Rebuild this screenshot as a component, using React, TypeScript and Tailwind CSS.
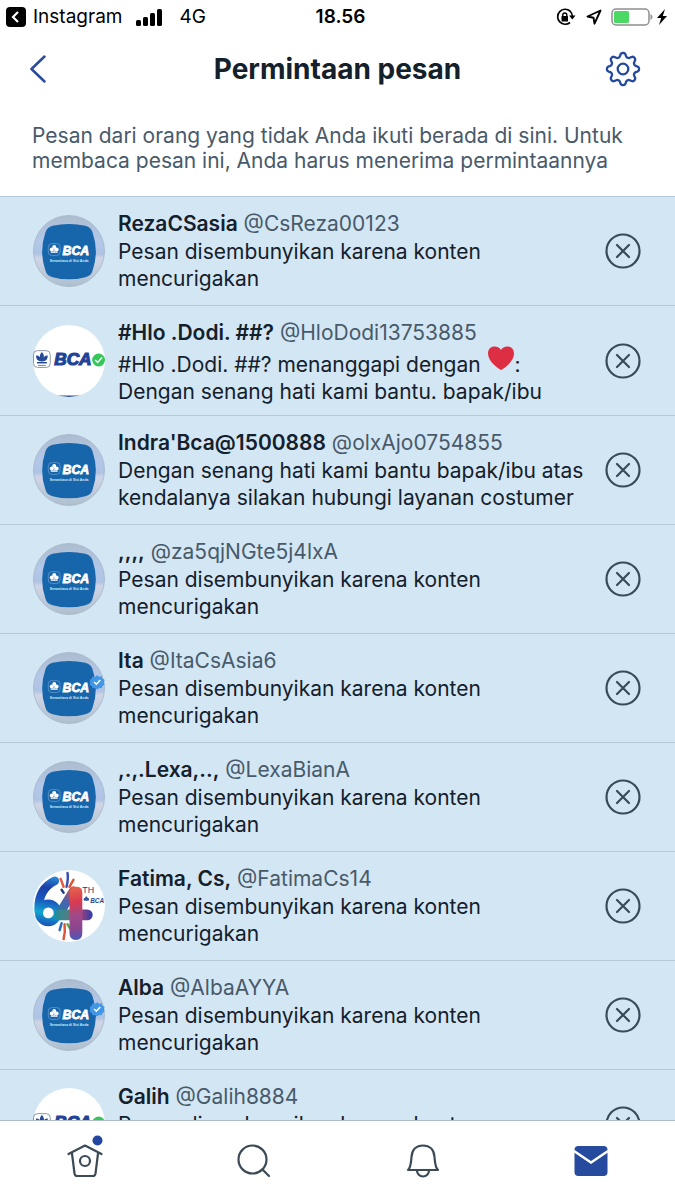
import React from "react";

type AvatarKind = "blue" | "blueVerified" | "white" | "anniversary";

interface MessageRequest {
  name: string;
  handle: string;
  avatar: AvatarKind;
  message: React.ReactNode;
}

const HIDDEN_MESSAGE = "Pesan disembunyikan karena konten mencurigakan";

const Heart = () => (
  <svg viewBox="0 0 28 26" className="-mt-2 inline-block h-[26px] w-7 align-[1px]" role="img" aria-label="hati">
    <path
      d="M14 25C12 24 1 17 1 8.500C1 4 4 1.500 7.500 1.500C10.500 1.500 13 3 14 5C15 3 17.500 1.500 20.500 1.500C24 1.500 27 4 27 8.500C27 17 16 24 14 25Z"
      fill="#dd2e44"
    />
  </svg>
);

const requests: MessageRequest[] = [
  { name: "RezaCSasia", handle: "@CsReza00123", avatar: "blue", message: HIDDEN_MESSAGE },
  {
    name: "#Hlo .Dodi. ##?",
    handle: "@HloDodi13753885",
    avatar: "white",
    message: (
      <>
        <span className="block pt-1">
          #Hlo .Dodi. ##? menanggapi dengan <Heart />:
        </span>
        <span className="block">Dengan senang hati kami bantu. bapak/ibu</span>
      </>
    ),
  },
  {
    name: "Indra'Bca@1500888",
    handle: "@olxAjo0754855",
    avatar: "blue",
    message: "Dengan senang hati kami bantu bapak/ibu atas kendalanya silakan hubungi layanan costumer",
  },
  { name: ",,,,", handle: "@za5qjNGte5j4lxA", avatar: "blue", message: HIDDEN_MESSAGE },
  { name: "Ita", handle: "@ItaCsAsia6", avatar: "blueVerified", message: HIDDEN_MESSAGE },
  { name: ",.,.Lexa,..,", handle: "@LexaBianA", avatar: "blue", message: HIDDEN_MESSAGE },
  { name: "Fatima, Cs,", handle: "@FatimaCs14", avatar: "anniversary", message: HIDDEN_MESSAGE },
  { name: "Alba", handle: "@AlbaAYYA", avatar: "blueVerified", message: HIDDEN_MESSAGE },
  { name: "Galih", handle: "@Galih8884", avatar: "white", message: HIDDEN_MESSAGE },
];

const Clover = ({ color }: { color: string }) => (
  <g fill={color}>
    <circle cx="6" cy="3.500" r="2" />
    <circle cx="3.500" cy="6" r="2" />
    <circle cx="8.500" cy="6" r="2" />
    <path d="M5.500 5h1v3h3v1.200h-7V8h3z" />
  </g>
);

const BlueAvatar = ({ id, verified }: { id: string; verified?: boolean }) => (
  <svg viewBox="0 0 73 73" className="size-[72px] shrink-0" role="img" aria-label="BCA">
    <defs>
      <linearGradient id={`${id}-ring`} x1="0" y1="0" x2="0" y2="1">
        <stop offset="0" stopColor="#adbdcf" />
        <stop offset="0.350" stopColor="#b3c7e8" />
        <stop offset="0.540" stopColor="#afc3e4" />
        <stop offset="0.600" stopColor="#d0d5e6" />
        <stop offset="1" stopColor="#adbfce" />
      </linearGradient>
    </defs>
    <circle cx="36.500" cy="36.500" r="36" fill={`url(#${id}-ring)`} stroke="#a5b5c6" strokeWidth="0.800" />
    <path
      d="M20 11Q36.500 7 53 11Q59 12.500 60.500 18Q67 37 60.500 56Q59 62 53 63Q36.500 67.500 20 63Q14 62 12.500 56Q6 37 12.500 18Q14 12.500 20 11Z"
      fill="#1765ab"
    />
    <rect x="15.500" y="29" width="12" height="12" rx="3.500" fill="none" stroke="#6fa0d0" strokeWidth="0.700" />
    <g transform="translate(15.500 29)">
      <Clover color="#fff" />
    </g>
    <text x="30" y="40.500" fontFamily="Liberation Sans, sans-serif" fontSize="12.500" fontWeight="700" fontStyle="italic" fill="#fff" stroke="#fff" strokeWidth="0.800">
      BCA
    </text>
    <text x="17" y="47.500" fontFamily="Liberation Sans, sans-serif" fontSize="3.500" fontWeight="700" fill="#d8e6f3">
      Senantiasa di Sisi Anda
    </text>
    {verified && (
      <g>
        <path
          d="M65 23.500l2 1.500 2.500-.3 1 2.300 2 1.200-.5 2.500.5 2.500-2 1.200-1 2.300-2.500-.3-2 1.500-2-1.500-2.500.3-1-2.300-2-1.200.5-2.500-.5-2.500 2-1.200 1-2.300 2.500.3z"
          fill="#4197e4"
        />
        <path d="M62 30.500l2.200 2.200 4-4.200" fill="none" stroke="#fff" strokeWidth="1.500" />
      </g>
    )}
  </svg>
);

const WhiteAvatar = ({ id }: { id: string }) => (
  <svg viewBox="0 0 73 73" className="size-[72px] shrink-0" role="img" aria-label="BCA">
    <clipPath id={`${id}-clip`}>
      <circle cx="36.500" cy="36.500" r="36.500" />
    </clipPath>
    <g clipPath={`url(#${id}-clip)`}>
      <rect width="73" height="73" fill="#fff" />
      <rect x="20" y="71.500" width="33" height="3" fill="#2a4b8c" />
    </g>
    <rect x="0.500" y="26" width="17" height="17" rx="4" fill="#fff" stroke="#8c94a5" strokeWidth="1" />
    <g fill="#254a98">
      <path d="M9 27.500Q13 31 9.500 37H8.500Q5 31 9 27.500Z" />
      <path d="M3 31Q8 31 8.700 37Q3 37 3 31Z" />
      <path d="M15 31Q10 31 9.300 37Q15 37 15 31Z" />
      <path d="M4 37.500h10v1.500H4z" />
    </g>
    <path d="M5 41h8" stroke="#7085b6" strokeWidth="1" />
    <text x="21.500" y="41" fontFamily="Liberation Sans, sans-serif" fontSize="17.500" fontWeight="700" fontStyle="italic" fill="#1f4398" stroke="#1f4398" strokeWidth="1.200">
      BCA
    </text>
    <circle cx="66.500" cy="35.500" r="6.500" fill="#35c75a" />
    <path d="M63 35.500l2.500 2.500 4.500-5" fill="none" stroke="#fff" strokeWidth="1.500" />
  </svg>
);

const AnniversaryAvatar = () => (
  <svg viewBox="0 0 73 73" className="size-[72px] shrink-0" role="img" aria-label="64th BCA">
    <defs>
      <linearGradient id="six" gradientUnits="userSpaceOnUse" x1="20" y1="6" x2="10" y2="56">
        <stop offset="0" stopColor="#2a8fd8" />
        <stop offset="0.250" stopColor="#1b3fa8" />
        <stop offset="0.500" stopColor="#1a58c0" />
        <stop offset="0.750" stopColor="#12a5cf" />
        <stop offset="1" stopColor="#1a50b8" />
      </linearGradient>
      <linearGradient id="four" gradientUnits="userSpaceOnUse" x1="38" y1="17" x2="48" y2="70">
        <stop offset="0" stopColor="#e8664c" />
        <stop offset="0.300" stopColor="#d83a50" />
        <stop offset="0.550" stopColor="#a04a8a" />
        <stop offset="0.800" stopColor="#8a4590" />
        <stop offset="1" stopColor="#4a58b8" />
      </linearGradient>
      <linearGradient id="diagonal" gradientUnits="userSpaceOnUse" x1="42" y1="18" x2="24" y2="46">
        <stop offset="0" stopColor="#d8504a" />
        <stop offset="0.500" stopColor="#4a62b0" />
        <stop offset="1" stopColor="#1d7d98" />
      </linearGradient>
      <linearGradient id="bar" gradientUnits="userSpaceOnUse" x1="22" y1="45" x2="60" y2="45">
        <stop offset="0" stopColor="#1f8f9c" />
        <stop offset="0.400" stopColor="#5a7a80" />
        <stop offset="0.650" stopColor="#b04070" />
        <stop offset="1" stopColor="#2e3fae" />
      </linearGradient>
    </defs>
    <circle cx="36.500" cy="36.500" r="36.500" fill="#fff" />
    <g fill="none" strokeLinecap="round" strokeWidth="2.500">
      <path d="M31 17L28 9" stroke="#e65a43" />
      <path d="M34 17Q36 9 35 3" stroke="#3a50b0" />
      <path d="M37 17L41 10" stroke="#e15436" />
      <path d="M31 23L29 20" stroke="#1d3a83" />
      <path d="M32 55Q33 63 31 70" stroke="#df563f" />
      <path d="M35 55L38 60" stroke="#5ba651" />
      <path d="M29 54L27 61" stroke="#3168bb" />
    </g>
    <path d="M22 11C10 17 5 28 6 42" fill="none" stroke="url(#six)" strokeWidth="9" strokeLinecap="round" />
    <circle cx="15.500" cy="43.500" r="9.500" fill="none" stroke="url(#six)" strokeWidth="8" />
    <path d="M41 21L27 44" stroke="url(#diagonal)" strokeWidth="9" strokeLinecap="round" />
    <path d="M27 45.500H55" stroke="url(#bar)" strokeWidth="11" strokeLinecap="round" />
    <path d="M37 24Q37 17 44 17Q50 17 50 23V64Q50 71 43.500 71Q37 71 37 64Z" fill="url(#four)" />
    <text x="50" y="23.500" fontFamily="Liberation Sans, sans-serif" fontSize="9" fill="#283b73">
      TH
    </text>
    <g transform="translate(50.500 26) scale(0.600)">
      <Clover color="#254a98" />
    </g>
    <text x="58" y="33" fontFamily="Liberation Sans, sans-serif" fontSize="6.500" fontWeight="700" fontStyle="italic" fill="#254a98">
      BCA
    </text>
  </svg>
);

const Avatar = ({ kind, id }: { kind: AvatarKind; id: string }) => {
  if (kind === "white") return <WhiteAvatar id={id} />;
  if (kind === "anniversary") return <AnniversaryAvatar />;
  return <BlueAvatar id={id} verified={kind === "blueVerified"} />;
};

const StatusBar = () => (
  <div className="grid h-[34px] grid-cols-[1fr_auto_1fr] items-center pr-1 pl-[6px] text-[19px] text-black">
    <div className="flex items-center">
      <svg viewBox="0 0 20 20" className="size-5">
        <rect width="20" height="20" rx="4" fill="#000" />
        <path d="M12 5L7 10l5 5" fill="none" stroke="#fff" strokeWidth="2.200" />
      </svg>
      <span className="ml-[7px]">Instagram</span>
      <svg viewBox="0 0 27 17" className="ml-[14px] h-[17px] w-[27px]">
        <rect x="0" y="11" width="5" height="6" rx="1.500" />
        <rect x="7" y="8" width="5" height="9" rx="1.500" />
        <rect x="14" y="4" width="5" height="13" rx="1.500" />
        <rect x="21" y="0" width="5" height="17" rx="1.500" />
      </svg>
      <span className="ml-4">4G</span>
    </div>
    <span className="pl-1 font-semibold">18.56</span>
    <div className="mr-1 flex items-center justify-end">
      <svg viewBox="0 0 20 18" className="h-[18px] w-5" fill="none" stroke="#000" strokeWidth="1.700">
        <path d="M14 3A7.500 7.500 0 1 0 14 14.500M14 3Q16 5 16.300 8" />
        <path d="M13 7.500h6.500l-3.200 4z" fill="#000" stroke="none" />
        <rect x="5.500" y="8" width="6.500" height="5.500" rx="0.500" fill="#000" stroke="none" />
        <path d="M6.800 8.500V7a2 2 0 0 1 4 0v1.500" strokeWidth="1.400" />
      </svg>
      <svg viewBox="0 0 16 16" className="ml-[10px] size-4" fill="none" stroke="#000" strokeWidth="1.900" strokeLinejoin="round">
        <path d="M14.500 1.500L1.500 7.500l6 1.200 1 6z" />
      </svg>
      <svg viewBox="0 0 42 18" className="ml-[9px] h-[18px] w-[42px]">
        <rect x="1" y="1" width="37" height="16" rx="4" fill="none" stroke="#8f8f8f" strokeWidth="1.500" />
        <rect x="3" y="3" width="15" height="12" rx="1.500" fill="#4cd864" />
        <path d="M39.500 6Q41.500 7 41.500 9T39.500 12Z" fill="#8f8f8f" />
      </svg>
      <svg viewBox="0 0 10 16" className="ml-1 h-4 w-[10px]">
        <path d="M8 0L0 9h4.200L2 16l8-9H5.800z" />
      </svg>
    </div>
  </div>
);

// Outline of a cog with eight rounded teeth around (20, 20)
const gearPath =
  Array.from({ length: 144 }, (_, i) => {
    const angle = (i / 144) * Math.PI * 2;
    const wave = Math.cos(angle * 8);
    const radius = 14.1 + 2.2 * Math.tanh(1.4 * wave);
    const x = (20 + radius * Math.sin(angle)).toFixed(2);
    const y = (20 - radius * Math.cos(angle)).toFixed(2);
    return `${i === 0 ? "M" : "L"}${x} ${y}`;
  }).join("") + "Z";

const Header = () => (
  <header className="grid h-[70px] grid-cols-[1fr_auto_1fr] items-center px-[30px]">
    <button type="button" aria-label="Kembali" className="justify-self-start">
      <svg viewBox="0 0 18 30" className="h-[30px] w-[18px]" fill="none" stroke="#2a4b9b" strokeWidth="2.500" strokeLinecap="round" strokeLinejoin="round">
        <path d="M14.500 2.500L1.500 15l13 12.500" />
      </svg>
    </button>
    <h1 className="text-[28px] leading-9 font-bold text-[#14202b]">Permintaan pesan</h1>
    <button type="button" aria-label="Pengaturan" className="justify-self-end">
      <svg viewBox="2 0 40 40" className="size-10" fill="none" stroke="#254a9d" strokeWidth="2.300" strokeLinejoin="round">
        <path d={gearPath} />
        <circle cx="20" cy="20" r="5.300" />
      </svg>
    </button>
  </header>
);

const RequestRow = ({ request, index }: { request: MessageRequest; index: number }) => (
  <li className="flex min-h-[109px] shrink-0 items-center border-b border-[#b5cad9] pr-[34px] pl-[33px]">
    <Avatar kind={request.avatar} id={`avatar-${index}`} />
    <div className="ml-[13px] min-w-0 flex-1 self-start pt-[13px] pb-[10px] text-[21px] leading-[27px] text-[#14202b]">
      <p className="mb-px truncate">
        <span className="font-semibold">{request.name}</span>{" "}
        <span className="text-[#485a6a]">{request.handle}</span>
      </p>
      <div>{request.message}</div>
    </div>
    <button type="button" aria-label={`Tolak permintaan ${request.name}`} className="ml-4">
      <svg viewBox="0 0 36 36" className="size-9" fill="none" stroke="#374b5b" strokeWidth="2.200" strokeLinecap="round">
        <circle cx="18" cy="18" r="16.500" />
        <path d="M12 12l12 12M24 12L12 24" />
      </svg>
    </button>
  </li>
);

const BottomNav = () => (
  <nav className="grid h-20 shrink-0 grid-cols-4 border-t border-[#aebbc4] bg-white pl-[2px]">
    <a href="#home" aria-label="Beranda" className="flex items-center justify-center">
      <svg viewBox="0 -4 40 52" className="h-[52px] w-10" fill="none" stroke="#3c4a56" strokeWidth="2.200" strokeLinecap="round" strokeLinejoin="round">
        <path d="M2.500 15L19 6.500L35.500 15M6 14.500l2.500 20Q9 37 11 37h16q2 0 2.500-2.500L32 14.500" />
        <circle cx="19" cy="22" r="5" />
        <circle cx="31.500" cy="1.500" r="5" fill="#2346a0" stroke="none" />
      </svg>
    </a>
    <a href="#search" aria-label="Cari" className="flex items-center justify-center">
      <svg viewBox="0 0 34 34" className="size-[34px]" fill="none" stroke="#3c4a56" strokeWidth="2.200" strokeLinecap="round">
        <circle cx="15.500" cy="15.500" r="14" />
        <path d="M25.500 25.500l6.500 6.500" />
      </svg>
    </a>
    <a href="#notifications" aria-label="Notifikasi" className="flex items-center justify-center">
      <svg viewBox="0 0 34 34" className="size-[34px]" fill="none" stroke="#3c4a56" strokeWidth="2.200" strokeLinejoin="round">
        <path d="M2 26C5 23 5 18 5.500 13C6 6 10 1.500 17 1.500S28 6 28.500 13C29 18 29 23 32 26Z" />
        <path d="M11 26.500a6 6 0 0 0 12 0" />
      </svg>
    </a>
    <a href="#messages" aria-label="Pesan" className="flex items-center justify-center">
      <svg viewBox="0 0 34 32" className="h-8 w-[34px]">
        <rect x="0.500" y="1" width="33" height="30" rx="4" fill="#264a9d" />
        <path d="M0 6l17 11.500L34 6" fill="none" stroke="#fff" strokeWidth="2.400" />
      </svg>
    </a>
  </nav>
);

const App: React.FC = () => {
  return (
    <div className="flex h-screen flex-col overflow-hidden bg-white font-['Inter',sans-serif]">
      <StatusBar />
      <Header />
      <p className="border-b border-[#b5cad9] px-8 pt-[19px] pb-[23px] text-[21px] leading-[25px] text-[#485a6a]">
        Pesan dari orang yang tidak Anda ikuti berada di sini. Untuk membaca pesan ini, Anda harus menerima permintaannya
      </p>
      <ul className="flex min-h-0 flex-1 flex-col overflow-hidden bg-[#d3e6f4]">
        {requests.map((request, index) => (
          <RequestRow key={request.handle} request={request} index={index} />
        ))}
      </ul>
      <BottomNav />
    </div>
  );
};

export default App;
